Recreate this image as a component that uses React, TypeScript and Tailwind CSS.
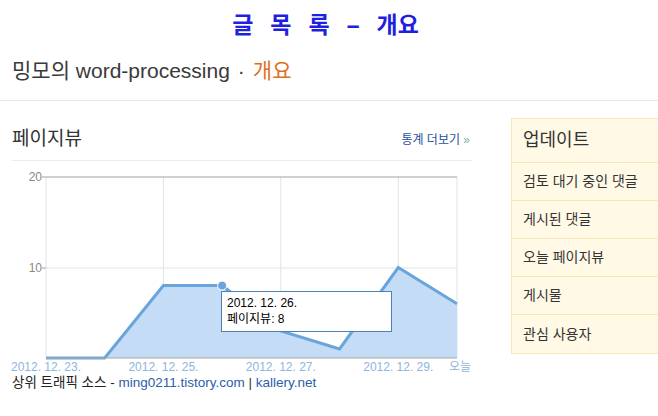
const font = '[font-family:"Liberation_Sans","Noto_Sans_CJK_KR",sans-serif]';

const values = [0, 0, 8, 8, 3, 1, 10, 6];
const X0 = 34;
const STEP = 58.71;
const Y0 = 193;
const UNIT = 9.05;

function px(i: number) {
  return X0 + i * STEP;
}
function py(v: number) {
  return Y0 - v * UNIT;
}

function PageViewChart() {
  const pts = values.map((v, i) => `${px(i)},${py(v)}`).join(' ');
  const area = `${px(0)},${Y0} ${pts} ${px(7)},${Y0}`;
  const labels = [
    { i: 0, t: '2012. 12. 23.' },
    { i: 2, t: '2012. 12. 25.' },
    { i: 4, t: '2012. 12. 27.' },
    { i: 6, t: '2012. 12. 29.' },
  ];
  return (
    <div className="relative h-[210px] w-[460px]">
      <svg width="470" height="210" className="block overflow-visible">
        {/* grid */}
        {[0, 2, 4, 6, 7].map((i) => (
          <line key={i} x1={px(i)} x2={px(i)} y1={12} y2={Y0} stroke="#e2e2e2" strokeWidth="1" />
        ))}
        <line x1={X0} x2={px(7)} y1={103} y2={103} stroke="#e4e4e4" strokeWidth="1" />
        <line x1={X0} x2={px(7)} y1={12} y2={12} stroke="#a0a0a0" strokeWidth="1" />
        <line x1={30} x2={X0} y1={12} y2={12} stroke="#a0a0a0" strokeWidth="1" />
        <line x1={30} x2={X0} y1={103} y2={103} stroke="#a0a0a0" strokeWidth="1" />
        <text x={30} y={16} textAnchor="end" fontSize="12" fill="#888" fontFamily="Liberation Sans, sans-serif">20</text>
        <text x={30} y={107} textAnchor="end" fontSize="12" fill="#888" fontFamily="Liberation Sans, sans-serif">10</text>

        <polygon points={area} fill="#c4dcf5" />
        <polyline points={pts} fill="none" stroke="#6aa4dc" strokeWidth="3" strokeLinejoin="miter" />
        <line x1={X0} x2={px(7)} y1={Y0} y2={Y0} stroke="#a8a8a8" strokeWidth="1" />
        <circle cx={px(3)} cy={py(8)} r="4.5" fill="#6aa4dc" stroke="#fff" strokeWidth="1" />

        {labels.map((l) => (
          <text key={l.i} x={px(l.i)} y={206} textAnchor="middle" fontSize="12" fill="#8cb5e0" fontFamily="Liberation Sans, sans-serif">
            {l.t}
          </text>
        ))}
        <text x={px(7) + 14} y={206} textAnchor="end" fontSize="12" fill="#8cb5e0" fontFamily="Noto Sans CJK KR, sans-serif">
          오늘
        </text>
      </svg>

      {/* tooltip */}
      <div className="absolute left-[209px] top-[126px] w-[171px] h-[41px] border border-[#4d7fb8] bg-white px-[5px] pt-[3px] text-[12px] leading-[16px] text-black">
        <div>2012. 12. 26.</div>
        <div>페이지뷰: 8</div>
      </div>
    </div>
  );
}

const updates = ['검토 대기 중인 댓글', '게시된 댓글', '오늘 페이지뷰', '게시물', '관심 사용자'];

export default function App() {
  return (
    <div className={`w-[658px] h-[416px] overflow-hidden bg-white ${font}`}>
      {/* Title */}
      <div className="h-[44px] flex items-center justify-center gap-[17px] pt-[6px] pr-[7px] text-[23px] font-bold text-[#1f1fe0]">
        <span>글</span>
        <span>목</span>
        <span>록</span>
        <span>–</span>
        <span>개요</span>
      </div>

      {/* Blog name */}
      <div className="h-[57px] px-3 flex items-center border-b border-[#e8e8e8] pb-[2px] text-[21px]">
        <span className="text-[#3a3a3a]">밍모의 word-processing</span>
        <span className="text-[#3a3a3a] mx-[8px]">·</span>
        <span className="text-[#e07020]">개요</span>
      </div>

      <div className="flex pt-[17px]">
        {/* Main column */}
        <div className="ml-3 w-[460px] flex flex-col">
          <div className="h-[43px] flex items-center justify-between border-b border-[#ececec] pt-[1px]">
            <span className="text-[19px] text-[#333]">페이지뷰</span>
            <span className="text-[12px] text-[#1f4f9c] mr-[2px]">
              통계 더보기 <span className="text-[#8aa]">»</span>
            </span>
          </div>
          <div className="pt-[4px]">
            <PageViewChart />
          </div>
          <div className="text-[13.5px] leading-[16px] text-[#222]">
            상위 트래픽 소스 - <span className="text-[#2b5ea8]">ming0211.tistory.com</span>{' '}
            <span className="text-[#333]">|</span> <span className="text-[#2b5ea8]">kallery.net</span>
          </div>
        </div>

        {/* Sidebar */}
        <div className="ml-[39px] w-[170px] shrink-0 bg-[#fff9e6] border border-[#f5e7b6] self-start">
          <div className="h-[44px] flex items-center px-[11px] border-b border-[#f5e7b6]">
            <span className="text-[18px] text-[#333]">업데이트</span>
          </div>
          {updates.map((u, i) => (
            <div
              key={u}
              className={`h-[38px] flex items-center px-[11px] text-[14px] text-[#333] ${i < updates.length - 1 ? 'border-b border-[#f5e7b6]' : ''}`}
            >
              {u}
            </div>
          ))}
        </div>
      </div>
    </div>
  );
}
